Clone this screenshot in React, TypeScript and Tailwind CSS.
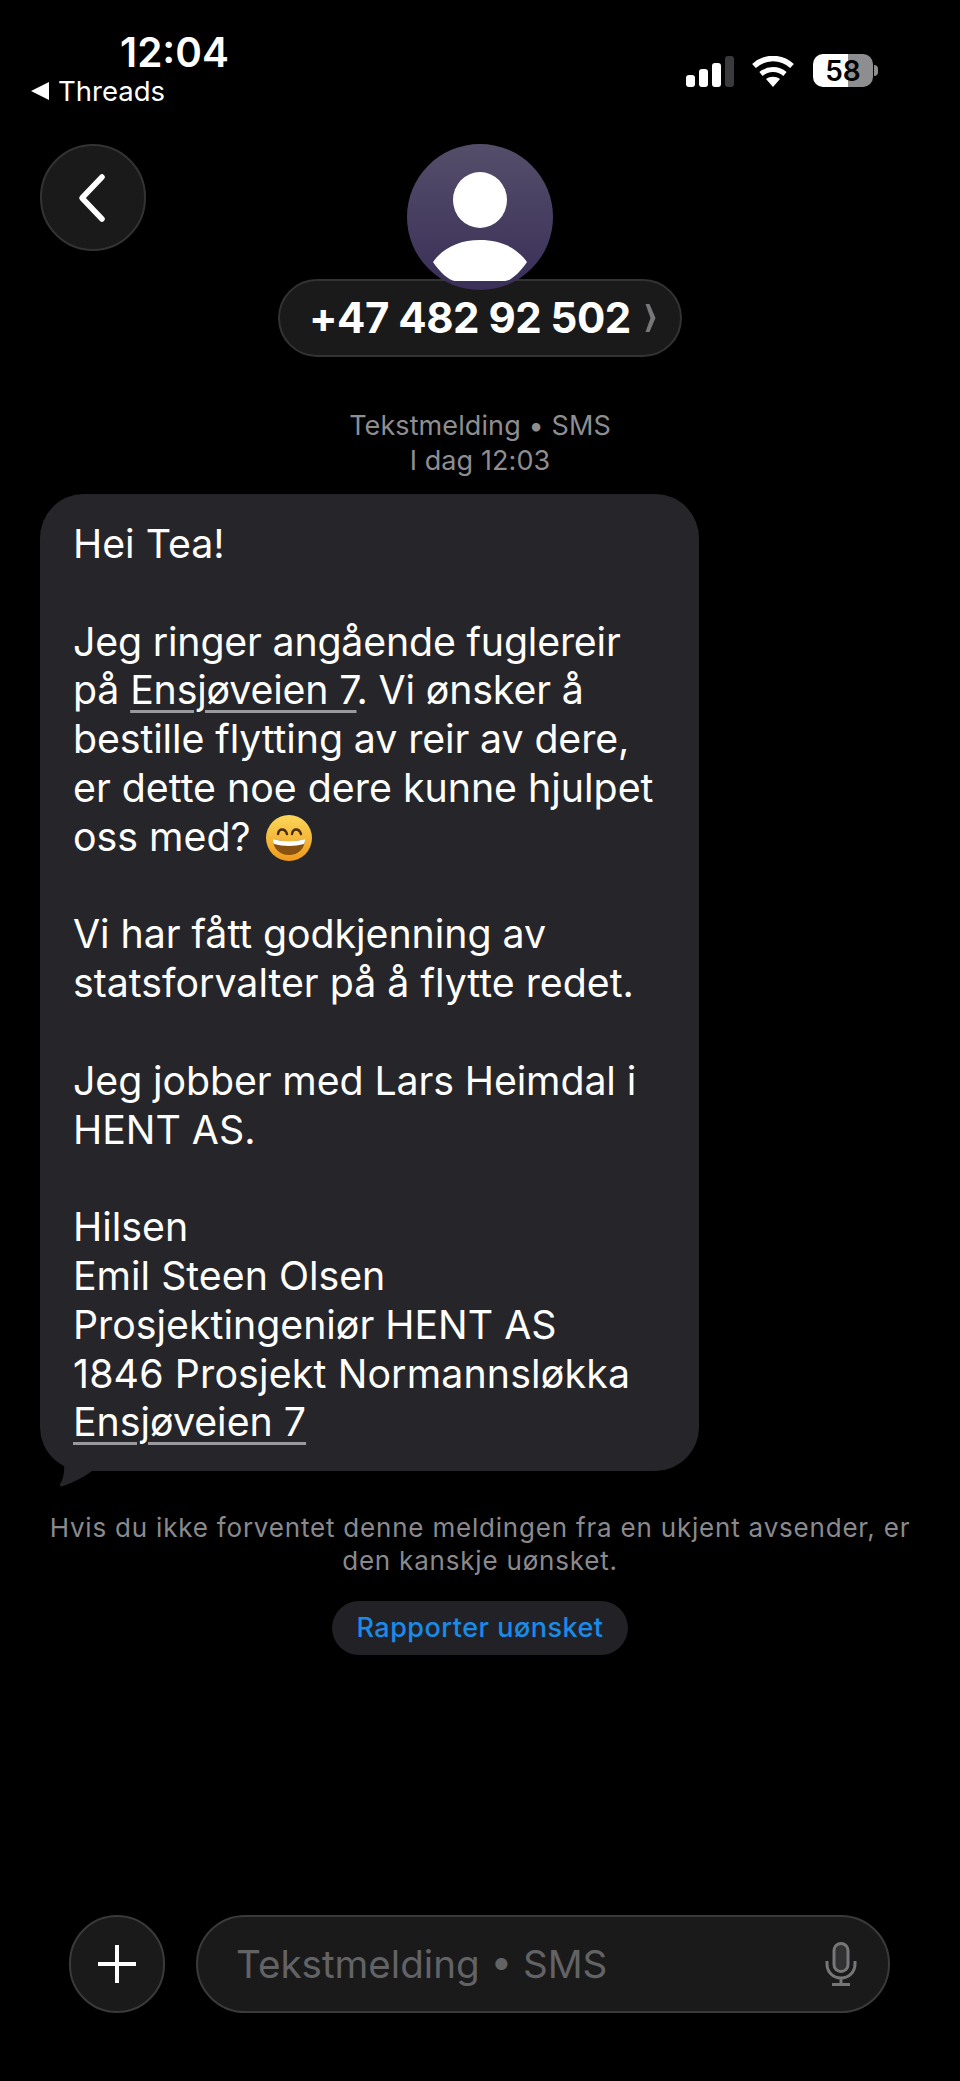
const font = "font-['Inter','Liberation_Sans',sans-serif]";

function Emoji() {
  return (
    <svg viewBox="0 0 48 48" className="inline-block w-[48px] h-[48px] align-[-1px] ml-[3px] -my-[10px]">
      <defs>
        <linearGradient id="face" x1="0" y1="0" x2="0" y2="1">
          <stop offset="0" stopColor="#fbd75a" />
          <stop offset="1" stopColor="#ee9a1c" />
        </linearGradient>
      </defs>
      <circle cx="24" cy="24" r="23" fill="url(#face)" />
      <path d="M13 20c1-6 7-6 9 0M27 20c1-6 7-6 9 0" fill="none" stroke="#4a2c0a" strokeWidth="2.4" strokeLinecap="round" />
      <path d="M8 25c10 3 22 3 32 0c0 10-7 16-16 16S8 35 8 25z" fill="#8a5210" />
      <path d="M8 25c10 3 22 3 32 0c0 3-.5 4-1 5c-9 2.500-21 2.500-30 0c-.6-1-1-2-1-5z" fill="#fff" />
    </svg>
  );
}

function Link({ children }: { children: string }) {
  return <span className="underline decoration-[#9a9a9e] decoration-[2.5px] underline-offset-[6px]">{children}</span>;
}

export default function App() {
  return (
    <div className={`${font} w-[960px] h-[2081px] bg-black text-white flex flex-col overflow-hidden`}>
      <div className="h-[144px] flex justify-between shrink-0">
        <div className="pt-[31px] pl-[30px]">
          <div className="pl-[90px] text-[40.500px] leading-[44px] font-semibold">12:04</div>
          <div className="flex items-center gap-[8px] text-[27.500px] leading-[32px]">
            <svg viewBox="0 0 20 20" className="w-[20px] h-[20px]"><path d="M19 1v18L1 10z" fill="#fff" /></svg>
            <span>Threads</span>
          </div>
        </div>
        <div className="flex items-start gap-[18px] pt-[54px] pr-[82px]">
          <svg viewBox="0 0 48 31" className="w-[48px] h-[31px] mt-[2px]">
            <rect x="0" y="19" width="9" height="12" rx="3" fill="#fff" />
            <rect x="13" y="13" width="9" height="18" rx="3" fill="#fff" />
            <rect x="26" y="7" width="9" height="24" rx="3" fill="#fff" />
            <rect x="39" y="0" width="9" height="31" rx="3" fill="#3a3a3c" />
          </svg>
          <svg viewBox="0 0 42 31" className="w-[42px] h-[31px] mt-[2px] mr-[1px]">
            <path d="M21 31l-7-8c4-3 10-3 14 0z" fill="#fff" />
            <path d="M9 18c7-6 17-6 24 0" fill="none" stroke="#fff" strokeWidth="5" />
            <path d="M2 10c11-10 27-10 38 0" fill="none" stroke="#fff" strokeWidth="5.500" />
          </svg>
          <div className="flex items-center">
            <div className="w-[60px] h-[33px] rounded-[10px] bg-[linear-gradient(90deg,#fff_0,#fff_58%,#8e8e90_58%)] flex items-center justify-center text-black text-[28px] leading-none font-semibold">58</div>
            <div className="w-[4px] h-[11px] ml-[1px] rounded-r-full bg-[#8e8e90]" />
          </div>
        </div>
      </div>

      <div className="grid grid-cols-[106px_1fr_106px] px-[40px] shrink-0">
        <div className="w-[106px] h-[107px] rounded-full bg-[#1a1a1a] border-[2px] border-[#333336] flex items-center justify-center">
          <svg viewBox="0 0 30 50" className="w-[30px] h-[50px] -ml-[2px]"><path d="M25 4L5 25l20 21" fill="none" stroke="#fff" strokeWidth="5.500" strokeLinecap="round" strokeLinejoin="round" /></svg>
        </div>
        <div className="flex flex-col items-center">
          <div className="relative z-10 w-[146px] h-[146px] rounded-full bg-[linear-gradient(180deg,#544e6a_0%,#3a2f58_100%)] overflow-hidden">
            <svg viewBox="0 0 146 146" className="w-[146px] h-[146px]">
              <ellipse cx="73" cy="56" rx="27" ry="28" fill="#fff" />
              <path d="M26 118C36 104 52 96 73 96s37 8 47 22c-6 9-16 19-22 19H48c-6 0-16-10-22-19z" fill="#fff" />
            </svg>
          </div>
          <div className="-mt-[11px] w-[404px] h-[78px] rounded-full bg-[#1a1a1a] border-[2px] border-[#333336] flex items-center pl-[29px]">
            <span className="text-[42px] leading-none font-bold tracking-[-0.5px]">+47 482 92 502</span>
            <svg viewBox="0 0 10 28" className="w-[11px] h-[28px] ml-[14px]"><path d="M0 0h4l6 14-6 14H0l5-14z" fill="#77777a" /></svg>
          </div>
        </div>
        <div />
      </div>

      <div className="mt-[51px] text-center text-[27px] leading-[35px] tracking-[0.1px] text-[#8e8e92] shrink-0">
        <div>Tekstmelding • SMS</div>
        <div>I dag 12:03</div>
      </div>

      <div className="relative ml-[40px] mt-[16px] w-[659px] h-[977px] rounded-[44px] bg-[#26262a] pl-[33px] pt-[26px] text-[39.300px] leading-[48.800px] shrink-0">
        <div>Hei Tea!</div>
        <div className="h-[48.800px]" />
        <div className="tracking-[-0.18px]">Jeg ringer angående fuglereir</div>
        <div className="tracking-[-0.15px]">på <Link>Ensjøveien 7</Link>. Vi ønsker å</div>
        <div className="tracking-[-0.1px]">bestille flytting av reir av dere,</div>
        <div>er dette noe dere kunne hjulpet</div>
        <div>oss med? <Emoji /></div>
        <div className="h-[48.800px]" />
        <div className="tracking-[-0.05px]">Vi har fått godkjenning av</div>
        <div>statsforvalter på å flytte redet.</div>
        <div className="h-[48.800px]" />
        <div className="tracking-[-0.1px]">Jeg jobber med Lars Heimdal i</div>
        <div>HENT AS.</div>
        <div className="h-[48.800px]" />
        <div>Hilsen</div>
        <div>Emil Steen Olsen</div>
        <div>Prosjektingeniør HENT AS</div>
        <div className="tracking-[0.15px]">1846 Prosjekt Normannsløkka</div>
        <div><Link>Ensjøveien 7</Link></div>
        <svg viewBox="0 0 36 24" className="absolute left-[20px] -bottom-[16px] w-[36px] h-[24px]">
          <path d="M4 0C5 9 3 17 0 21c-1 2 1 3 3 2c12-4 22-10 29-15H36V0z" fill="#26262a" />
        </svg>
      </div>

      <div className="mt-[40px] text-center text-[26px] leading-[33px] tracking-[0.8px] text-[#8a8a8e] shrink-0">
        <div>Hvis du ikke forventet denne meldingen fra en ukjent avsender, er</div>
        <div>den kanskje uønsket.</div>
      </div>

      <div className="mt-[24px] flex justify-center shrink-0">
        <div className="w-[296px] h-[54px] rounded-full bg-[#222226] flex items-center justify-center text-[#1a8be8] text-[27px] font-medium tracking-[0.5px]">Rapporter uønsket</div>
      </div>

      <div className="mt-[260px] ml-[69px] flex items-center gap-[31px] shrink-0">
        <div className="w-[96px] h-[98px] rounded-full bg-[#1a1a1a] border-[2px] border-[#3a3a3c] flex items-center justify-center">
          <svg viewBox="0 0 38 38" className="w-[38px] h-[38px]"><path d="M19 0v38M0 19h38" stroke="#fff" strokeWidth="4" /></svg>
        </div>
        <div className="w-[694px] h-[98px] rounded-full bg-[#1a1a1a] border-[2px] border-[#3a3a3c] flex items-center justify-between pl-[38px] pr-[31px]">
          <span className="text-[38.600px] leading-none text-[#636366]">Tekstmelding • SMS</span>
          <svg viewBox="0 0 32 44" className="w-[32px] h-[44px]" fill="none" stroke="#77777a" strokeWidth="3">
            <rect x="9" y="1.500" width="14" height="28" rx="7" fill="#77777a" fillOpacity="0.25" />
            <path d="M2 19v3c0 8 6 14 14 14s14-6 14-14v-3M16 36v6M7 42.500h18" />
          </svg>
        </div>
      </div>
    </div>
  );
}
